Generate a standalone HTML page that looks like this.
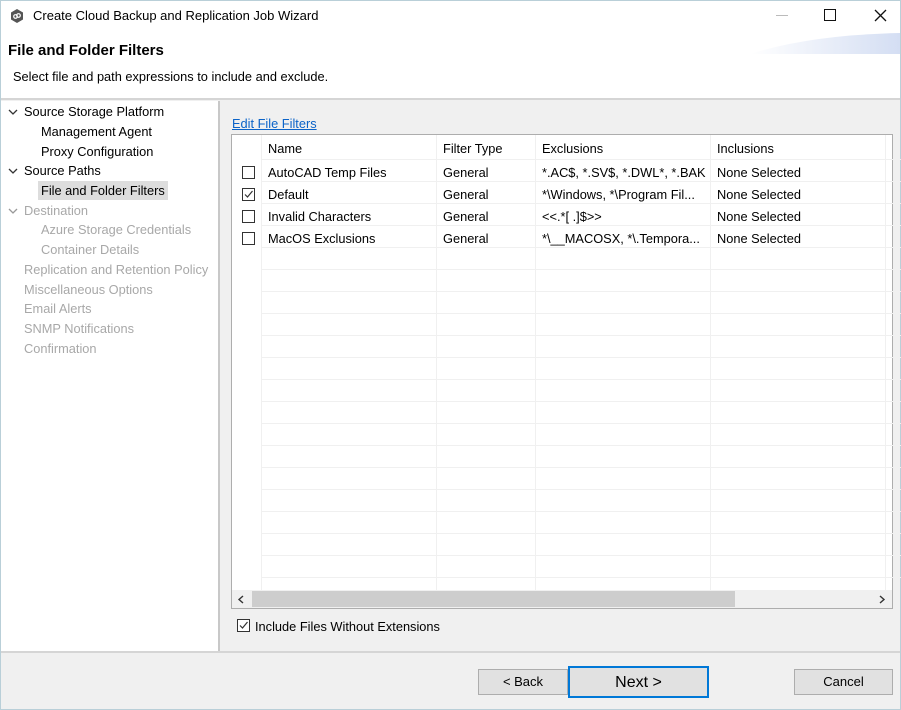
<!DOCTYPE html>
<html><head><style>
*{margin:0;padding:0;box-sizing:border-box}
body{width:901px;height:710px;background:#f0f0f0;font-family:"Liberation Sans",sans-serif;font-size:12.5px;color:#000;position:relative;overflow:hidden}
.abs{position:absolute}
.win{left:0;top:0;width:901px;height:710px;border:1px solid #b9cfd8}
.title{left:1px;top:1px;width:899px;height:32px;background:#fff}
.hdr{left:1px;top:33px;width:899px;height:67px;background:#fff;border-bottom:2px solid #d5d5d5}
.nav{left:1px;top:101px;width:219px;height:551px;background:#fff;border-right:2px solid #c8c8c8}
.nav div{position:absolute;white-space:nowrap;font-size:12.8px}
.g{color:#a8a8a8}
.tbl{left:231px;top:134px;width:662px;height:475px;background:#fff;border:1px solid #adadad}
.vl{position:absolute;top:0;width:1px;height:455px;background:#f0f0f0}
.hl{position:absolute;left:30px;width:654px;height:1px;background:#f0f0f0}
.cell{position:absolute;white-space:nowrap;font-size:12.8px}
.cb{position:absolute;width:13px;height:13px;border:1px solid #333;background:#fff}
.btn{position:absolute;background:#e1e1e1;border:1px solid #adadad;text-align:center;font-size:13px}
</style></head><body>
<div class="abs win"></div>
<div class="abs title"></div>
<svg class="abs" style="left:10px;top:9px" width="14" height="14" viewBox="0 0 14 14"><polygon points="7,0 13,3.5 13,10.5 7,14 1,10.5 1,3.5" fill="#555"/><circle cx="5.5" cy="7.5" r="1.8" fill="none" stroke="#fff" stroke-width="1.2"/><circle cx="8.5" cy="6.5" r="1.8" fill="none" stroke="#fff" stroke-width="1.2"/></svg>
<div class="abs" style="left:33px;top:8px;font-size:13px">Create Cloud Backup and Replication Job Wizard</div>
<div class="abs" style="left:776px;top:15px;width:12px;height:1px;background:#bbb"></div>
<div class="abs" style="left:824px;top:9px;width:12px;height:12px;border:1.5px solid #111"></div>
<svg class="abs" style="left:874px;top:9px" width="13" height="13"><path d="M1 1L12 12M12 1L1 12" stroke="#111" stroke-width="1.3"/></svg>
<div class="abs hdr"></div>
<svg class="abs" style="left:750px;top:33px" width="150" height="22"><defs><linearGradient id="gr" x1="0" x2="1"><stop offset="0" stop-color="#fff"/><stop offset="1" stop-color="#d4def3"/></linearGradient></defs><path d="M0 21 Q60 2 150 0 L150 21 Z" fill="url(#gr)"/></svg>
<div class="abs" style="left:8px;top:42px;font-size:15px;font-weight:bold">File and Folder Filters</div>
<div class="abs" style="left:13px;top:69px;font-size:12.8px">Select file and path expressions to include and exclude.</div>
<div class="abs nav">
<svg style="position:absolute;left:7px;top:8px" width="10" height="6"><path d="M1 1L5 5L9 1" fill="none" stroke="#333" stroke-width="1.3"/></svg>
<div style="left:23px;top:3px">Source Storage Platform</div>
<div style="left:40px;top:23px">Management Agent</div>
<div style="left:40px;top:43px">Proxy Configuration</div>
<svg style="position:absolute;left:7px;top:67px" width="10" height="6"><path d="M1 1L5 5L9 1" fill="none" stroke="#333" stroke-width="1.3"/></svg>
<div style="left:23px;top:62px">Source Paths</div>
<div style="left:37px;top:80px;width:130px;height:19px;background:#ddd;position:absolute"></div>
<div style="left:40px;top:82px">File and Folder Filters</div>
<svg style="position:absolute;left:7px;top:107px" width="10" height="6"><path d="M1 1L5 5L9 1" fill="none" stroke="#999" stroke-width="1.3"/></svg>
<div class="g" style="left:23px;top:102px">Destination</div>
<div class="g" style="left:40px;top:121px">Azure Storage Credentials</div>
<div class="g" style="left:40px;top:141px">Container Details</div>
<div class="g" style="left:23px;top:161px">Replication and Retention Policy</div>
<div class="g" style="left:23px;top:181px">Miscellaneous Options</div>
<div class="g" style="left:23px;top:200px">Email Alerts</div>
<div class="g" style="left:23px;top:220px">SNMP Notifications</div>
<div class="g" style="left:23px;top:240px">Confirmation</div>
</div>
<div class="abs" style="left:232px;top:116px;color:#0b63c8;text-decoration:underline;font-size:12.8px">Edit File Filters</div>
<div class="abs tbl">
<div class="vl" style="left:29px"></div><div class="vl" style="left:204px"></div><div class="vl" style="left:303px"></div><div class="vl" style="left:478px"></div><div class="vl" style="left:653px"></div>
<div class="hl" style="top:24px"></div><div class="hl" style="top:46px"></div><div class="hl" style="top:68px"></div><div class="hl" style="top:90px"></div><div class="hl" style="top:112px"></div><div class="hl" style="top:134px"></div><div class="hl" style="top:156px"></div><div class="hl" style="top:178px"></div><div class="hl" style="top:200px"></div><div class="hl" style="top:222px"></div><div class="hl" style="top:244px"></div><div class="hl" style="top:266px"></div><div class="hl" style="top:288px"></div><div class="hl" style="top:310px"></div><div class="hl" style="top:332px"></div><div class="hl" style="top:354px"></div><div class="hl" style="top:376px"></div><div class="hl" style="top:398px"></div><div class="hl" style="top:420px"></div><div class="hl" style="top:442px"></div>
<div class="cell" style="left:36px;top:6px">Name</div><div class="cell" style="left:211px;top:6px">Filter Type</div><div class="cell" style="left:310px;top:6px">Exclusions</div><div class="cell" style="left:485px;top:6px">Inclusions</div>
<div class="cb" style="left:10px;top:31px"></div><div class="cell" style="left:36px;top:30px">AutoCAD Temp Files</div><div class="cell" style="left:211px;top:30px">General</div><div class="cell" style="left:310px;top:30px">*.AC$, *.SV$, *.DWL*, *.BAK</div><div class="cell" style="left:485px;top:30px">None Selected</div>
<div class="cb" style="left:10px;top:53px"><svg width="11" height="11" style="position:absolute;left:0;top:0"><path d="M2 5.5L4.5 8L9.5 2" fill="none" stroke="#333" stroke-width="1.2"/></svg></div><div class="cell" style="left:36px;top:52px">Default</div><div class="cell" style="left:211px;top:52px">General</div><div class="cell" style="left:310px;top:52px">*\Windows, *\Program Fil...</div><div class="cell" style="left:485px;top:52px">None Selected</div>
<div class="cb" style="left:10px;top:75px"></div><div class="cell" style="left:36px;top:74px">Invalid Characters</div><div class="cell" style="left:211px;top:74px">General</div><div class="cell" style="left:310px;top:74px">&lt;&lt;.*[ .]$&gt;&gt;</div><div class="cell" style="left:485px;top:74px">None Selected</div>
<div class="cb" style="left:10px;top:97px"></div><div class="cell" style="left:36px;top:96px">MacOS Exclusions</div><div class="cell" style="left:211px;top:96px">General</div><div class="cell" style="left:310px;top:96px">*\__MACOSX, *\.Tempora...</div><div class="cell" style="left:485px;top:96px">None Selected</div>
<div style="position:absolute;left:0;top:455px;width:660px;height:18px;background:#f0f0f0"></div>
<div style="position:absolute;left:20px;top:456px;width:483px;height:16px;background:#cdcdcd"></div>
<svg style="position:absolute;left:5px;top:460px" width="8" height="9"><path d="M6 1L2 4.5L6 8" fill="none" stroke="#333" stroke-width="1.4"/></svg>
<svg style="position:absolute;left:646px;top:460px" width="8" height="9"><path d="M2 1L6 4.5L2 8" fill="none" stroke="#333" stroke-width="1.4"/></svg>
</div>
<div class="abs cb" style="left:237px;top:619px;border-color:#333"><svg width="11" height="11" style="position:absolute;left:0;top:0"><path d="M2 5.5L4.5 8L9.5 2" fill="none" stroke="#333" stroke-width="1.2"/></svg></div>
<div class="abs" style="left:255px;top:619px;font-size:12.8px">Include Files Without Extensions</div>
<div class="abs" style="left:1px;top:651px;width:899px;height:2px;background:#d5d5d5"></div>
<div class="btn" style="left:478px;top:669px;width:90px;height:26px;line-height:24px">&lt; Back</div>
<div class="btn" style="left:568px;top:666px;width:141px;height:32px;line-height:30px;border:2px solid #0078d7;font-size:16px">Next &gt;</div>
<div class="btn" style="left:794px;top:669px;width:99px;height:26px;line-height:24px">Cancel</div>
</body></html>
